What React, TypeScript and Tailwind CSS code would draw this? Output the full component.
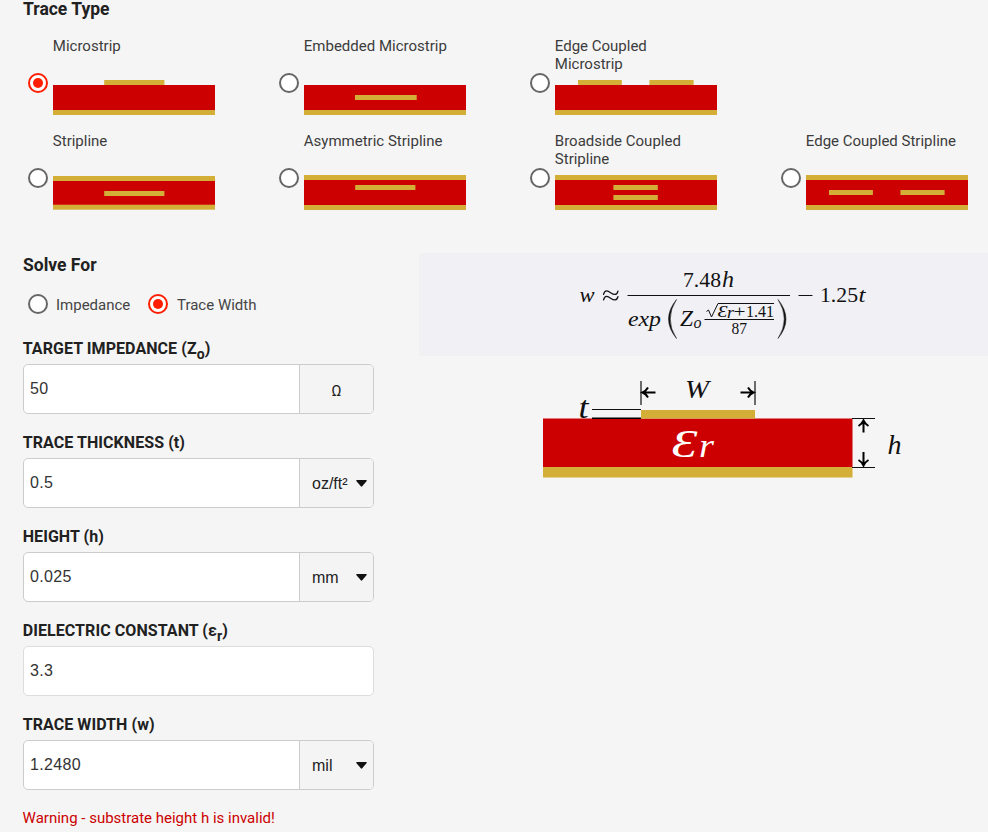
import { ReactNode } from "react";

type Rect = [number, number, number, number];

const GOLD = "#d4af37";
const RED = "#cc0000";

function Radio({ checked = false }: { checked?: boolean }) {
  return (
    <span
      className={`flex size-5 shrink-0 items-center justify-center rounded-full border-2 bg-white ${
        checked ? "border-[#ff1e00]" : "border-[#666666]"
      }`}
    >
      {checked && <span className="size-[10px] rounded-full bg-[#ff1e00]" />}
    </span>
  );
}

function Board({ red, gold }: { red: Rect; gold: Rect[] }) {
  return (
    <svg width="162" height="35" viewBox="0 0 162 35" className="mt-[7px] block">
      <rect x={red[0]} y={red[1]} width={red[2]} height={red[3]} fill={RED} />
      {gold.map((g, i) => (
        <rect key={i} x={g[0]} y={g[1]} width={g[2]} height={g[3]} fill={GOLD} />
      ))}
    </svg>
  );
}

const base: Rect = [0, 5, 162, 25];
const bottom: Rect = [0, 30, 162, 5];
const top: Rect = [0, 0, 162, 5];

const options: { label: string; red: Rect; gold: Rect[]; checked?: boolean }[] = [
  { label: "Microstrip", red: base, gold: [bottom, [51.2, 0, 60.2, 5]], checked: true },
  { label: "Embedded Microstrip", red: base, gold: [bottom, [51, 15, 61.7, 5]] },
  { label: "Edge Coupled Microstrip", red: base, gold: [bottom, [23, 0, 43.8, 5], [94.4, 0, 44.2, 5]] },
  { label: "Stripline", red: [0, 6, 162, 24], gold: [[0, 1, 162, 5], [0, 29.7, 162, 5], [51.2, 16, 60.2, 5]] },
  { label: "Asymmetric Stripline", red: base, gold: [top, bottom, [51.2, 10, 60.2, 5]] },
  { label: "Broadside Coupled Stripline", red: base, gold: [top, bottom, [58.4, 10, 44.4, 5], [58.4, 20, 44.4, 5]] },
  { label: "Edge Coupled Stripline", red: base, gold: [top, bottom, [23, 15, 43.9, 5], [94.4, 15, 44.2, 5]] },
];

function TraceOption({ label, red, gold, checked }: (typeof options)[number]) {
  return (
    <div className="flex h-[95px] gap-[5px]">
      <div className="pt-9">
        <Radio checked={checked} />
      </div>
      <div className="w-[162px]">
        <div className="-ml-[0.2px] h-9 text-[15px] leading-[18px] text-[#3c3c3c]">{label}</div>
        <Board red={red} gold={gold} />
      </div>
    </div>
  );
}

function Sub({ children }: { children: string }) {
  return <sub className="bottom-[-0.35em] text-[14px]">{children}</sub>;
}

function Field({ label, value, unit, select }: { label: ReactNode; value: string; unit?: string; select?: boolean }) {
  return (
    <div className="h-[94px]">
      <div className="-ml-[0.3px] h-[26px] pt-px text-[16px] leading-[20px] font-bold tracking-[0.07px] whitespace-nowrap text-[#212121]">
        {label}
      </div>
      <div
        className={`flex h-[50px] w-[351px] overflow-hidden rounded-[5px] border bg-white ${
          unit ? "border-[#cccccc]" : "border-[#dddddd]"
        }`}
      >
        <div className="flex-1 pl-[6px] font-['Liberation_Sans',Arial,sans-serif] text-[16px] leading-[47px] tracking-[0.35px] text-[#333]">
          {value}
        </div>
        {unit && (
          <div
            className={`flex w-[74px] items-center border-l border-[#cccccc] bg-[#f4f4f4] text-[#222] ${
              select
                ? "justify-between pt-[2px] pr-[6px] pl-3 font-['Liberation_Sans',Arial,sans-serif] text-[16px]"
                : "justify-center pt-[4px] text-[15px]"
            }`}
          >
            <span>{unit}</span>
            {select && (
              <svg width="11" height="7" viewBox="0 0 11 7" className="-mt-[2px]">
                <path d="M0.8 0H10.2Q11 0 10.7 .9L6.2 6.3Q5.5 7 4.8 6.3L.3 .9Q0 0 .8 0Z" fill="#111" />
              </svg>
            )}
          </div>
        )}
      </div>
    </div>
  );
}

function MathText({ x, y, size, width, italic, fill, children }: {
  x: number; y: number; size: number; width: number; italic?: boolean; fill?: string; children: string;
}) {
  return (
    <text
      x={x}
      y={y}
      fontSize={size}
      textLength={width}
      lengthAdjust="spacingAndGlyphs"
      fontStyle={italic ? "italic" : "normal"}
      fill={fill ?? "#111"}
    >
      {children}
    </text>
  );
}

function Formula() {
  return (
    <div className="h-[103px] rounded-l-[4px] border-y border-l border-[#f0f0f1] bg-[#f0f0f5] pt-[6px] pl-[140px]">
      <svg width="330" height="90" viewBox="560 260 330 90" className="block font-['Liberation_Serif',serif]">
        <MathText x={579.5} y={302} size={22} width={15} italic>w</MathText>
        <g fill="none" stroke="#111" strokeWidth="1.2" strokeLinecap="round">
          <path d="M603.5 294.5C605 289 608 291 611 293S617 295.500 618 291" />
          <path d="M603.5 300C605 294.500 608 296.500 611 298.500S617 301 618 296.500" />
          <path d="M799 295.500H812" />
        </g>
        <MathText x={683} y={287} size={22} width={38}>7.48</MathText>
        <MathText x={722} y={287} size={23} width={12} italic>h</MathText>
        <path d="M627.500 295.500H790" stroke="#111" strokeWidth="1.1" />
        <MathText x={628} y={325.500} size={22} width={33} italic>exp</MathText>
        <path d="M676.500 299.500Q660.500 319 676.500 338.500Q664 319 676.500 299.500Z" fill="#111" stroke="#111" strokeWidth=".5" />
        <path d="M778 299.500Q794 319 778 338.500Q790.500 319 778 299.500Z" fill="#111" stroke="#111" strokeWidth=".5" />
        <MathText x={680} y={325.500} size={24} width={13} italic>Z</MathText>
        <MathText x={693.5} y={328} size={16} width={8} italic>o</MathText>
        <path d="M706.500 311.500L708.500 310L711.500 317L718 303.500H774" fill="none" stroke="#111" strokeWidth="1" />
        <MathText x={717.5} y={316.500} size={17} width={10} italic>Ɛ</MathText>
        <MathText x={727} y={317.500} size={17} width={7} italic>r</MathText>
        <MathText x={733.5} y={317} size={17} width={12}>+</MathText>
        <MathText x={746} y={316.500} size={16} width={28}>1.41</MathText>
        <path d="M704.500 319.500H774" stroke="#111" strokeWidth="1" />
        <MathText x={731.500} y={333.500} size={16} width={15.500}>87</MathText>
        <MathText x={820} y={302} size={22} width={38}>1.25</MathText>
        <MathText x={858.5} y={302} size={22} width={7} italic>t</MathText>
      </svg>
    </div>
  );
}

function Diagram() {
  return (
    <svg width="380" height="110" viewBox="540 375 380 110" className="mt-[19px] ml-[121px] block font-['Liberation_Serif',serif]">
      <rect x="543" y="418.500" width="309.500" height="49" fill={RED} />
      <rect x="543" y="467" width="309.500" height="10.500" fill={GOLD} />
      <rect x="641" y="410" width="114" height="8.500" fill={GOLD} />
      <g stroke="#111" fill="none" strokeWidth="1.2">
        <path d="M641 381V405M755 381V405M592 409.500H641M852 418.500H875M852 467.500H875" />
      </g>
      <path d="M592 418.300H641" stroke="#000" strokeWidth="1.5" />
      <g stroke="#000" fill="none" strokeWidth="2">
        <path d="M655.500 392.500H643M648 387.500Q646 391 642.500 392.500Q646 394 648 397.500" />
        <path d="M740.500 392.500H753M748 387.500Q750 391 753.500 392.500Q750 394 748 397.500" />
        <path d="M863.500 432.500V421M858.500 426Q862 424 863.500 420.500Q865 424 868.500 426" />
        <path d="M863.500 452V465M858.500 460Q862 462 863.500 465.500Q865 462 868.500 460" />
      </g>
      <MathText x={685} y={397.500} size={25} width={24} italic>W</MathText>
      <MathText x={578.5} y={417.5} size={31} width={10} italic>t</MathText>
      <MathText x={887.5} y={454} size={27} width={14} italic>h</MathText>
      <MathText x={671.5} y={457} size={40} width={26} italic fill="#fff">Ɛ</MathText>
      <MathText x={699} y={457} size={34} width={15} italic fill="#fff">r</MathText>
    </svg>
  );
}

export default function App() {
  return (
    <main className="h-[832px] w-[988px] overflow-hidden bg-[#f5f5f5] font-[Roboto,sans-serif]">
      <h2 className="h-[37px] pl-[23px] text-[17.5px] leading-[18px] font-bold text-[#212121]">Trace Type</h2>
      <div className="grid h-[216px] w-[1004px] grid-cols-[repeat(4,251px)] content-start pl-7">
        {options.slice(0, 3).map((o) => (
          <TraceOption key={o.label} {...o} />
        ))}
        <div />
        {options.slice(3).map((o) => (
          <TraceOption key={o.label} {...o} />
        ))}
      </div>
      <div className="flex">
        <section className="w-[419px] shrink-0 pl-[23px]">
          <h2 className="h-[41px] pt-[2px] text-[17.5px] leading-[20px] font-bold text-[#212121]">Solve For</h2>
          <div className="flex h-[44px] items-start pl-[5px] text-[15px] leading-[20px] text-[#444]">
            <Radio />
            <span className="ml-2 w-[92px] pt-px">Impedance</span>
            <Radio checked />
            <span className="ml-[9px] pt-px">Trace Width</span>
          </div>
          <Field label={<>TARGET IMPEDANCE (Z<Sub>o</Sub>)</>} value="50" unit="Ω" />
          <Field label="TRACE THICKNESS (t)" value="0.5" unit="oz/ft²" select />
          <Field label="HEIGHT (h)" value="0.025" unit="mm" select />
          <Field label={<>DIELECTRIC CONSTANT (ε<Sub>r</Sub>)</>} value="3.3" />
          <Field label="TRACE WIDTH (w)" value="1.2480" unit="mil" select />
          <p className="-ml-[0.4px] text-[15px] leading-[20px] text-[#cc0000]">Warning - substrate height h is invalid!</p>
        </section>
        <section className="min-w-0 flex-1">
          <Formula />
          <Diagram />
        </section>
      </div>
    </main>
  );
}
